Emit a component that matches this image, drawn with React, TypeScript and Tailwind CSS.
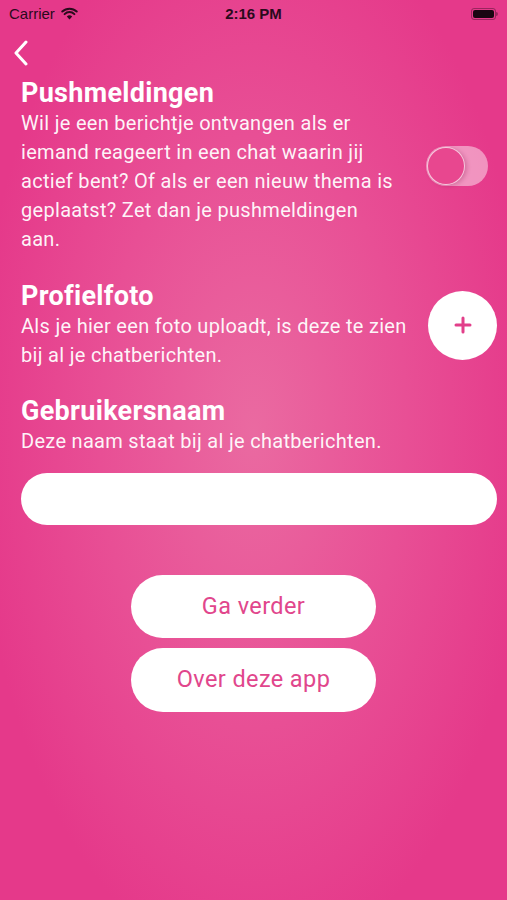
import { Plus } from 'lucide-react'

const FONT = "font-['Roboto','Liberation_Sans',sans-serif]"

const StatusBar = () => (
  <div className="flex h-[28px] items-center justify-between px-[9px] text-[15px] text-[#2a0a1c]">
    <div className="flex w-[120px] items-center gap-[6px] font-['Liberation_Sans',sans-serif]">
      <span>Carrier</span>
      <svg width="17" height="13" viewBox="0 0 17 13" className="mt-[-2px]">
        <path d="M8.5 12.5 L5.8 9.4 A4 4 0 0 1 11.2 9.4 Z" fill="#2a0a1c" />
        <path d="M3.6 7.1 A7 7 0 0 1 13.4 7.1" stroke="#2a0a1c" strokeWidth="2" fill="none" strokeLinecap="round" />
        <path d="M1.3 4.5 A10.5 10.5 0 0 1 15.7 4.5" stroke="#2a0a1c" strokeWidth="2" fill="none" strokeLinecap="round" />
      </svg>
    </div>
    <span className="font-['Liberation_Sans',sans-serif] font-bold">2:16 PM</span>
    <div className="flex w-[120px] justify-end">
      <div className="flex items-center">
        <div className="h-[12px] w-[25px] rounded-[3px] border border-[#2a0a1c]/40 p-[1px]">
          <div className="h-full w-full rounded-[2px] bg-[#1a0612]" />
        </div>
        <div className="h-[4px] w-[2px] rounded-r-sm bg-[#2a0a1c]/40" />
      </div>
    </div>
  </div>
)

const Section = ({ title, children }: { title: string; children: React.ReactNode }) => (
  <div className="flex flex-col">
    <h2 className="text-[27px] font-bold leading-[32px] tracking-[0.3px] text-white">{title}</h2>
    <p className="text-[20px] leading-[29px] tracking-[0.3px] text-white/95">{children}</p>
  </div>
)

export default function App() {
  return (
    <div
      className={`${FONT} min-h-[900px] w-full bg-[radial-gradient(ellipse_55%_60%_at_50%_48%,#ea6aa1_0%,#e84f95_55%,#e5398a_100%)]`}
    >
      <StatusBar />

      <div className="flex h-[49px] items-center pl-[13px]">
        <svg width="16" height="26" viewBox="0 0 16 26">
          <path d="M13 2 L3 13 L13 24" stroke="white" strokeWidth="3" fill="none" strokeLinecap="round" strokeLinejoin="round" />
        </svg>
      </div>

      <div className="flex flex-col pl-[21px] pr-[10px]">
        <div className="flex items-center">
          <div className="w-[376px]">
            <Section title="Pushmeldingen">
              Wil je een berichtje ontvangen als er iemand reageert in een chat waarin jij actief bent? Of als er een nieuw thema is geplaatst? Zet dan je pushmeldingen aan.
            </Section>
          </div>
          <div className="ml-auto mr-[9px] flex h-[40px] w-[62px] items-center rounded-full bg-white/45 p-[1px]">
            <div className="h-[38px] w-[38px] rounded-full border-[1.5px] border-white/70 bg-[#e8478f] shadow-[2px_1px_4px_rgba(120,0,60,0.25)]" />
          </div>
        </div>

        <div className="mt-[26px] flex items-center">
          <div className="w-[395px]">
            <Section title="Profielfoto">
              Als je hier een foto uploadt, is deze te zien bij al je chatberichten.
            </Section>
          </div>
          <div className="ml-auto flex h-[69px] w-[69px] items-center justify-center rounded-full bg-white">
            <Plus size={24} strokeWidth={3} className="text-[#e23f8a]" />
          </div>
        </div>

        <div className="mt-[25px]">
          <Section title="Gebruikersnaam">Deze naam staat bij al je chatberichten.</Section>
        </div>

        <div className="mt-[17px] h-[52px] w-full rounded-full bg-white" />

        <div className="mt-[50px] flex flex-col items-center gap-[10px] pr-[11px]">
          <button className="h-[63px] w-[245px] rounded-full bg-white text-[23.5px] tracking-[0.4px] text-[#e1468c]">
            Ga verder
          </button>
          <button className="h-[64px] w-[245px] rounded-full bg-white text-[23.5px] tracking-[0.4px] text-[#e1468c]">
            Over deze app
          </button>
        </div>
      </div>
    </div>
  )
}
